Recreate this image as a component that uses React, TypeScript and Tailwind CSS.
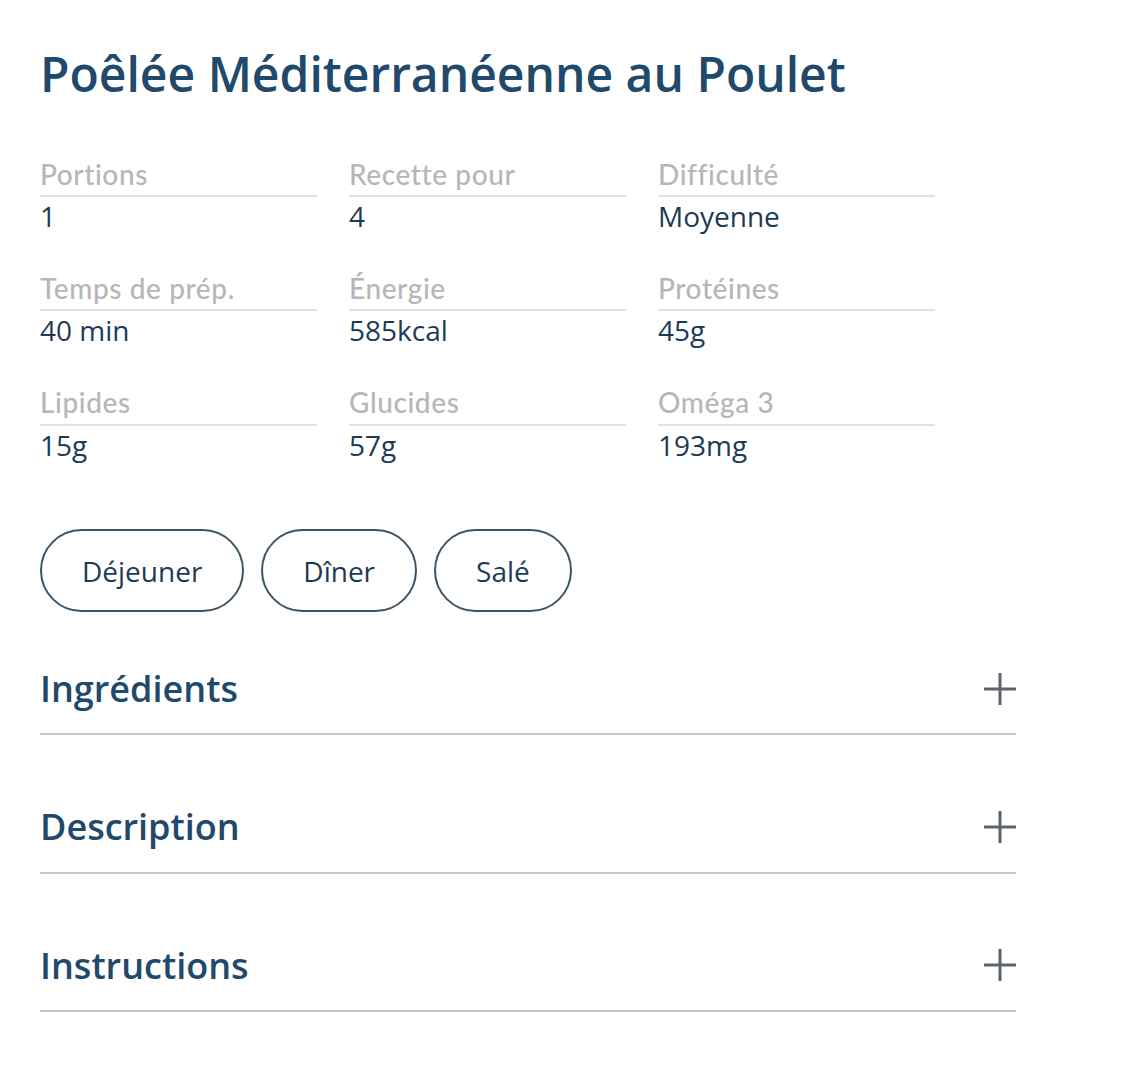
const stats = [
  { label: "Portions", value: "1" },
  { label: "Recette pour", value: "4" },
  { label: "Difficulté", value: "Moyenne" },
  { label: "Temps de prép.", value: "40 min" },
  { label: "Énergie", value: "585kcal" },
  { label: "Protéines", value: "45g" },
  { label: "Lipides", value: "15g" },
  { label: "Glucides", value: "57g" },
  { label: "Oméga 3", value: "193mg" },
];

const tags = ["Déjeuner", "Dîner", "Salé"];

const sections = ["Ingrédients", "Description", "Instructions"];

const PlusIcon = () => (
  <svg width="32" height="32" viewBox="0 0 32 32" className="text-[#5d6370]">
    <path d="M16 0v32M0 16h32" stroke="currentColor" strokeWidth="3" />
  </svg>
);

export default function App() {
  return (
    <div className="min-h-screen bg-white px-10 pt-[45px] font-['Open_Sans',sans-serif]">
      <h1 className="text-[48px] font-semibold leading-[1.2] text-[#21496b]">
        Poêlée Méditerranéenne au Poulet
      </h1>

      {/* infos de la recette */}
      <div className="mt-[55px] grid grid-cols-[277px_277px_277px] gap-x-8 gap-y-[38px]">
        {stats.map((s) => (
          <div key={s.label}>
            <div className="border-b-2 border-[#e1e1e4] pb-1 font-['Lato',sans-serif] text-[28px] font-medium leading-[1.2] tracking-[0.6px] text-[#b6b6ba]">
              {s.label}
            </div>
            <div className="mt-[3px] text-[28px] leading-[1.2] text-[#1d3b55]">{s.value}</div>
          </div>
        ))}
      </div>

      <div className="mt-[67px] flex gap-[17px]">
        {tags.map((t) => (
          <span
            key={t}
            className="flex h-[83px] items-center rounded-full border-2 border-[#3c5566] px-10 text-[28px] text-[#1d3b55]"
          >
            {t}
          </span>
        ))}
      </div>

      <div className="mt-[55px] w-[976px]">
        {sections.map((s, i) => (
          <div
            key={s}
            className={
              "flex items-center justify-between border-b-2 border-[#c1cad2] pb-[23px] " +
              (i === 0 ? "" : "pt-[70px]")
            }
          >
            <h2 className="text-[36px] font-semibold leading-[1.2] text-[#21496b]">{s}</h2>
            <PlusIcon />
          </div>
        ))}
      </div>
    </div>
  );
}
